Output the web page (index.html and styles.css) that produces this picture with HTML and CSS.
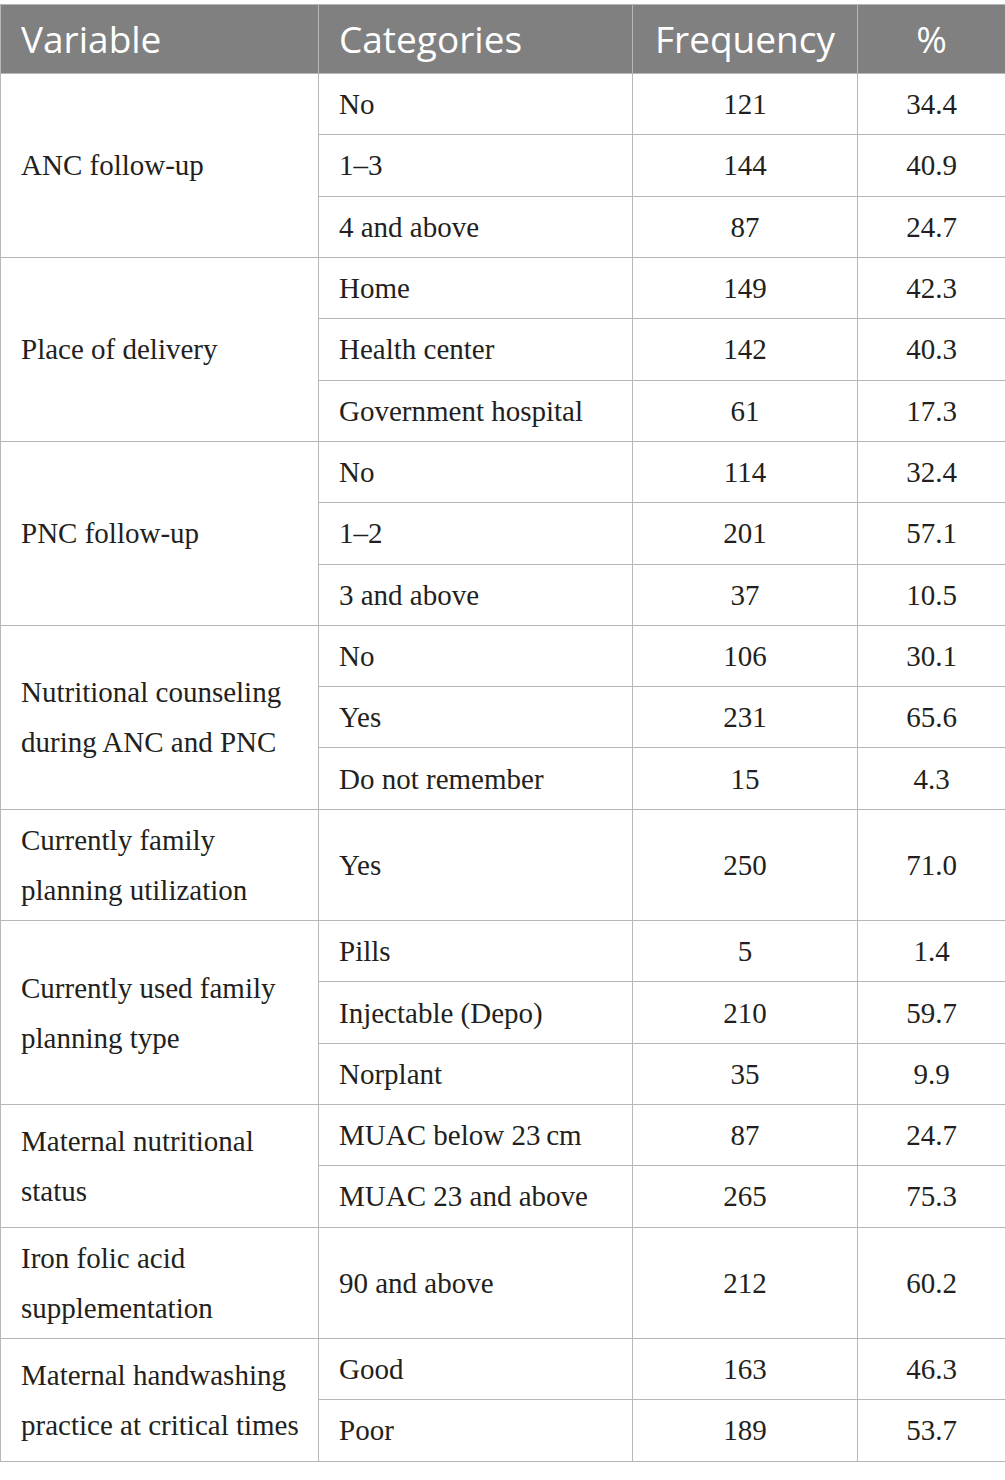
FILE: index.html
```html
<!DOCTYPE html>
<html lang="en">
<head>
<meta charset="utf-8">
<title>Table</title>
<link rel="stylesheet" href="styles.css">
</head>
<body>
<table class="data">
  <colgroup>
    <col class="c-var">
    <col class="c-cat">
    <col class="c-freq">
    <col class="c-pct">
  </colgroup>
  <thead>
    <tr>
      <th class="left">Variable</th>
      <th class="left">Categories</th>
      <th>Frequency</th>
      <th>%</th>
    </tr>
  </thead>
  <tbody>
    <tr><td rowspan="3" class="var">ANC follow-up</td><td>No</td><td class="num">121</td><td class="num">34.4</td></tr>
    <tr><td>1–3</td><td class="num">144</td><td class="num">40.9</td></tr>
    <tr><td>4 and above</td><td class="num">87</td><td class="num">24.7</td></tr>

    <tr><td rowspan="3" class="var">Place of delivery</td><td>Home</td><td class="num">149</td><td class="num">42.3</td></tr>
    <tr><td>Health center</td><td class="num">142</td><td class="num">40.3</td></tr>
    <tr><td>Government hospital</td><td class="num">61</td><td class="num">17.3</td></tr>

    <tr><td rowspan="3" class="var">PNC follow-up</td><td>No</td><td class="num">114</td><td class="num">32.4</td></tr>
    <tr><td>1–2</td><td class="num">201</td><td class="num">57.1</td></tr>
    <tr><td>3 and above</td><td class="num">37</td><td class="num">10.5</td></tr>

    <tr><td rowspan="3" class="var">Nutritional counseling during ANC and PNC</td><td>No</td><td class="num">106</td><td class="num">30.1</td></tr>
    <tr><td>Yes</td><td class="num">231</td><td class="num">65.6</td></tr>
    <tr><td>Do not remember</td><td class="num">15</td><td class="num">4.3</td></tr>

    <tr><td class="var">Currently family planning utilization</td><td>Yes</td><td class="num">250</td><td class="num">71.0</td></tr>

    <tr><td rowspan="3" class="var">Currently used family planning type</td><td>Pills</td><td class="num">5</td><td class="num">1.4</td></tr>
    <tr><td>Injectable (Depo)</td><td class="num">210</td><td class="num">59.7</td></tr>
    <tr><td>Norplant</td><td class="num">35</td><td class="num">9.9</td></tr>

    <tr><td rowspan="2" class="var">Maternal nutritional status</td><td>MUAC below 23&#8201;cm</td><td class="num">87</td><td class="num">24.7</td></tr>
    <tr><td>MUAC 23 and above</td><td class="num">265</td><td class="num">75.3</td></tr>

    <tr><td class="var">Iron folic acid supplementation</td><td>90 and above</td><td class="num">212</td><td class="num">60.2</td></tr>

    <tr><td rowspan="2" class="var">Maternal handwashing practice at critical times</td><td>Good</td><td class="num">163</td><td class="num">46.3</td></tr>
    <tr><td>Poor</td><td class="num">189</td><td class="num">53.7</td></tr>
  </tbody>
</table>
</body>
</html>
```

FILE: styles.css
```css
html, body {
  margin: 0;
  padding: 0;
  background: #ffffff;
}

body {
  padding-top: 4px;
}

.data {
  width: 1005px;
  table-layout: fixed;
  border-collapse: collapse;
  font-family: "Liberation Serif", "Times New Roman", serif;
  font-size: 29px;
  color: #231f20;
}

.c-var { width: 318px; }
.c-cat { width: 314px; }
.c-freq { width: 225px; }
.c-pct { width: 148px; }

.data th,
.data td {
  border: 1px solid #b7b7b7;
}

.data th {
  background: #808080;
  color: #ffffff;
  font-family: "Open Sans", "Noto Sans", sans-serif;
  font-weight: 400;
  font-size: 37px;
  line-height: 48px;
  height: 68px;
  padding: 0 20px;
  text-align: center;
  vertical-align: middle;
}

.data th.left {
  text-align: left;
}

.data td {
  line-height: 50px;
  padding: 5.17px 20px;
  text-align: left;
  vertical-align: middle;
}

.data td.var {
  padding-right: 4px;
}

.data td.num {
  text-align: center;
}
```
